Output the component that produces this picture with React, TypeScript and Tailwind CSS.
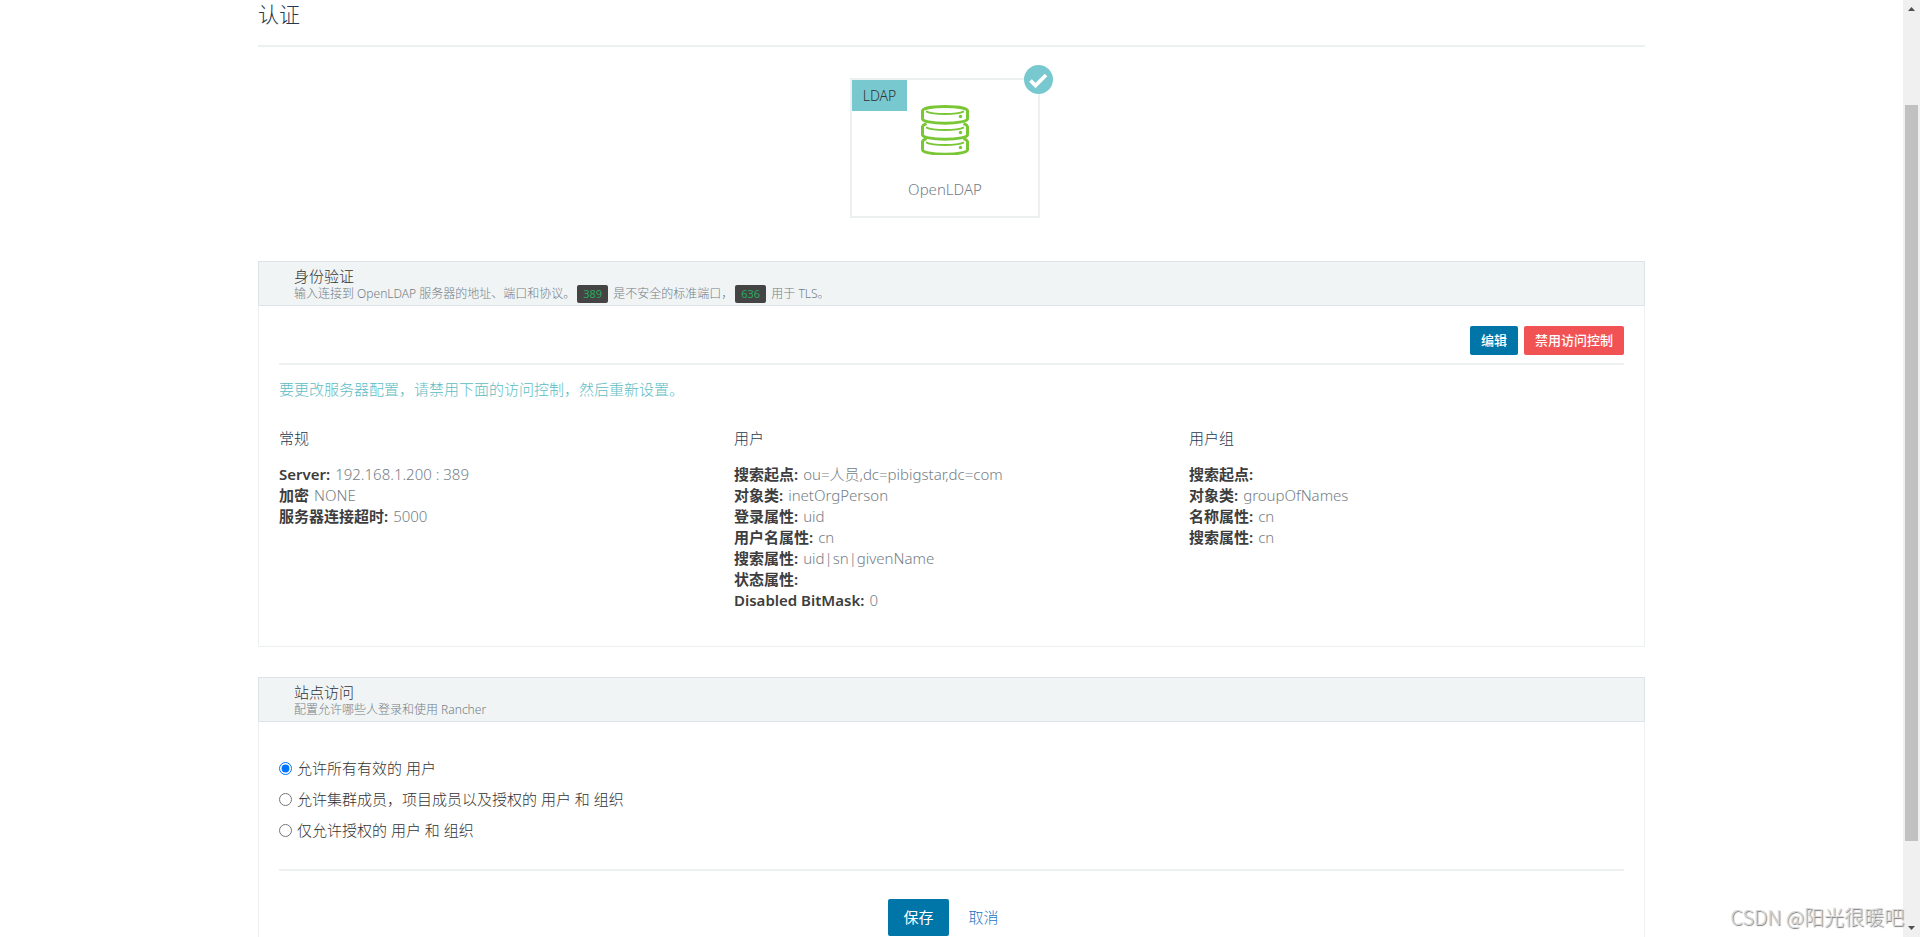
import type { ReactNode } from "react";

function Code({ children }: { children: ReactNode }) {
  return (
    <code className="mx-0.5 inline-block h-[18px] rounded-[2px] bg-[#444444] px-1.5 font-[Noto_Sans,Noto_Sans_CJK_SC,sans-serif] text-[11px] leading-[18px] font-normal text-[#27aa5e]">
      {children}
    </code>
  );
}

function Panel({ title, caption, children }: { title: string; caption: ReactNode; children: ReactNode }) {
  return (
    <section className="border border-[#ecf0f0]">
      <header className="-mx-px -mt-px flex h-[45px] flex-col justify-end border border-[#dce4e6] bg-[#f0f4f5] pb-[2px] pl-[35px]">
        <h2 className="h-[17px] text-[15px] leading-4 text-[#333333]">{title}</h2>
        <p className="h-[18px] text-xs leading-[18px] text-[#747e86]">{caption}</p>
      </header>
      <div className="px-5">{children}</div>
    </section>
  );
}

type Field = [label: string, value: string];

function Column({ title, fields }: { title: string; fields: Field[] }) {
  return (
    <div>
      <h3 className="mb-[15px] text-[15px] leading-[21px] text-[#24394f]">{title}</h3>
      <dl className="text-[15px] leading-[21px]">
        {fields.map(([label, value]) => (
          <div key={label} className="flex gap-[5px]">
            <dt className="font-semibold text-[#3d3d3d]">{label}</dt>
            <dd className="text-[#747e86]">{value}</dd>
          </div>
        ))}
      </dl>
    </div>
  );
}

const general: Field[] = [
  ["Server:", "192.168.1.200 : 389"],
  ["加密", "NONE"],
  ["服务器连接超时:", "5000"],
];
const users: Field[] = [
  ["搜索起点:", "ou=人员,dc=pibigstar,dc=com"],
  ["对象类:", "inetOrgPerson"],
  ["登录属性:", "uid"],
  ["用户名属性:", "cn"],
  ["搜索属性:", "uid|sn|givenName"],
  ["状态属性:", ""],
  ["Disabled BitMask:", "0"],
];
const groups: Field[] = [
  ["搜索起点:", ""],
  ["对象类:", "groupOfNames"],
  ["名称属性:", "cn"],
  ["搜索属性:", "cn"],
];
const accessModes = [
  "允许所有有效的 用户",
  "允许集群成员，项目成员以及授权的 用户 和 组织",
  "仅允许授权的 用户 和 组织",
];

function DatabaseIcon() {
  return (
    <svg width="48" height="50" viewBox="0 0 48 50" fill="none" stroke="#7ac736" aria-hidden="true">
      {[0, 16, 31].map((y) => (
        <g key={y} transform={`translate(0 ${y})`}>
          <path d="M1.500 5.500v8.500c0 2 9 4.300 22.500 4.300S46.500 16 46.500 14V5.500" strokeWidth="3" />
          <path d="M5 6.300C9 8.200 16 9 24 9s15-.8 19-2.700" strokeWidth="2" />
          <circle cx="39.500" cy="11.500" r="1.700" fill="#7ac736" stroke="none" />
        </g>
      ))}
      <path d="M1.500 6C1.500 3.500 11 1.500 24 1.500S46.500 3.500 46.500 6" strokeWidth="3" />
      <path d="M1.500 22c0-1.500 1.500-2.500 4-3.400M46.500 22c0-1.500-1.500-2.500-4-3.400M1.500 37c0-1.500 1.500-2.500 4-3.400M46.500 37c0-1.500-1.500-2.500-4-3.400" strokeWidth="3" />
    </svg>
  );
}

export default function App() {
  return (
    <div className="relative flex h-screen overflow-hidden bg-white font-[Noto_Sans,Noto_Sans_CJK_SC,sans-serif] font-light text-[#333333]">
      <div className="min-w-0 flex-1">
        <main className="mx-auto w-full max-w-[1387px]">
          <h1 className="border-b-2 border-[#ecf0f0] pb-4 text-[21px] leading-[29px] text-[#24394f]">认证</h1>

          <div className="mt-[31px] flex justify-center pr-[13px]">
            <div className="relative flex h-[140px] w-[190px] flex-col items-center border-2 border-[#ecf0f0] pt-[25px]">
              <span className="absolute top-0 left-0 h-[31px] w-[55px] bg-[#78c9cf] text-center text-sm leading-[31px] text-[#333333]">
                LDAP
              </span>
              <svg className="absolute -top-[15px] -right-[15px]" width="29" height="29" viewBox="0 0 29 29" aria-hidden="true">
                <circle cx="14.500" cy="14.500" r="14.500" fill="#78c9cf" />
                <path d="M6.500 15.500l5 5L22 10" fill="none" stroke="#fff" strokeWidth="3.800" />
              </svg>
              <DatabaseIcon />
              <span className="mt-6 text-[15px] leading-5 text-[#747e86]">OpenLDAP</span>
            </div>
          </div>

          <div className="mt-[43px]">
            <Panel
              title="身份验证"
              caption={
                <>
                  输入连接到 OpenLDAP 服务器的地址、端口和协议。
                  <Code>389</Code> 是不安全的标准端口，
                  <Code>636</Code> 用于 TLS。
                </>
              }
            >
              <div className="flex justify-end gap-1.5 border-b-2 border-[#ecf0f0] pt-5 pb-2">
                <button className="h-[29px] rounded-[2px] bg-[#0075a8] px-[11px] text-[13px] font-medium text-white">编辑</button>
                <button className="h-[29px] rounded-[2px] bg-[#f15354] px-[11px] text-[13px] font-medium text-white">
                  禁用访问控制
                </button>
              </div>
              <p className="mt-[14px] text-[15px] leading-[21px] text-[#5dbcc3]">
                要更改服务器配置，请禁用下面的访问控制，然后重新设置。
              </p>
              <div className="mt-7 grid grid-cols-3 gap-5 pb-[35px]">
                <Column title="常规" fields={general} />
                <Column title="用户" fields={users} />
                <Column title="用户组" fields={groups} />
              </div>
            </Panel>
          </div>

          <div className="mt-[30px]">
            <Panel title="站点访问" caption="配置允许哪些人登录和使用 Rancher">
              <div className="flex flex-col gap-2.5 border-b-2 border-[#ecf0f0] pt-9 pb-7">
                {accessModes.map((mode, i) => (
                  <label key={mode} className="flex h-[21px] items-center gap-[5px] text-[15px] leading-[21px]">
                    <input type="radio" name="access" defaultChecked={i === 0} className="size-[13px]" />
                    {mode}
                  </label>
                ))}
              </div>
              <div className="flex items-center justify-center gap-5 pt-7 pr-4 pb-10">
                <button className="h-[37px] rounded-[2px] bg-[#0075a8] px-[15px] text-[15px] font-normal text-white">保存</button>
                <a href="#" className="text-[15px] text-[#1c74c4]">
                  取消
                </a>
              </div>
            </Panel>
          </div>
        </main>
      </div>

      <div className="flex w-[17px] shrink-0 flex-col items-center bg-[#f0f0f0]" aria-hidden="true">
        <svg className="my-[7px]" width="7" height="4" viewBox="0 0 7 4">
          <path d="M0 4h7L3.500 0z" fill="#505050" />
        </svg>
        <div className="mt-[87px] h-[736px] w-[13px] bg-[#c1c1c1]" />
        <svg className="mt-auto mb-[7px]" width="7" height="4" viewBox="0 0 7 4">
          <path d="M0 0h7L3.500 4z" fill="#505050" />
        </svg>
      </div>

      <div className="absolute right-4 bottom-1.5 font-[Noto_Sans_CJK_SC,sans-serif] text-xl leading-7 text-[#d8d8d8] [text-shadow:1px_1px_1px_#777]">
        CSDN @阳光很暖吧
      </div>
    </div>
  );
}
